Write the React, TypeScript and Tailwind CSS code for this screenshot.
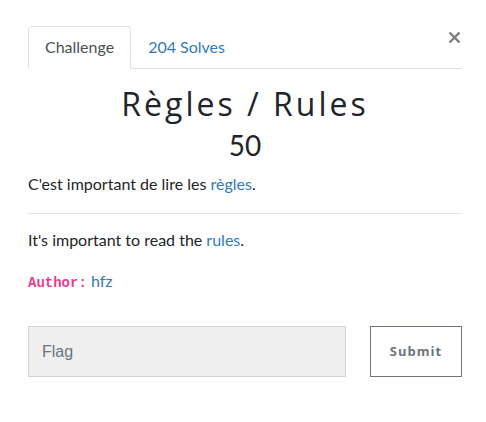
import React from "react";

export default function App() {
  return (
    <div className="relative w-[486px] h-[422px] bg-white text-[#212529]" style={{ fontFamily: "Lato, 'Noto Sans', sans-serif" }}>
      <button className="absolute left-[446px] top-[29px] w-[16px] h-[16px] flex items-center justify-center" aria-label="Close">
        <svg width="13" height="13" viewBox="0 0 13 13">
          <path d="M1.5 1.5 L11.5 11.5 M11.5 1.5 L1.5 11.5" stroke="#7d7d7d" strokeWidth="2.4" strokeLinecap="butt" />
        </svg>
      </button>
      <div className="pt-[26px] pl-[28px] w-[462px]">
        <nav className="flex border-b border-[#dee2e6] text-[16px] leading-[24px]">
          <div className="px-[16px] py-[8px] border border-[#dee2e6] border-b-white -mb-px rounded-t-[4px] bg-white text-[#495057]">Challenge</div>
          <div className="px-[16px] py-[8px] border border-transparent text-[#337ab7]">204 Solves</div>
        </nav>
        <div className="pt-[16px]">
          <h2 className="text-center text-[32px] leading-[38px] font-normal tracking-[3px] mb-[5px]" style={{ fontFamily: "'Open Sans', 'Noto Sans', sans-serif" }}>Règles / Rules</h2>
          <h3 className="text-center text-[28px] leading-[34px] font-normal mb-[10px]">50</h3>
          <p className="text-[16px] leading-[24px] mb-[17px]">C'est important de lire les <a className="text-[#337ab7]">règles</a>.</p>
          <hr className="border-t border-[#e5e5e5] mb-[14px]" />
          <p className="text-[16px] leading-[24px] mb-[17px]">It's important to read the <a className="text-[#337ab7]">rules</a>.</p>
          <p className="text-[16px] leading-[24px]">
            <code className="text-[#e83e8c] font-bold text-[14px]" style={{ fontFamily: "'Liberation Mono', monospace" }}>Author:</code>{" "}
            <a className="text-[#337ab7]">hfz</a>
          </p>
        </div>
        <div className="flex mt-[31px] gap-[24px] items-start">
          <input
            placeholder="Flag"
            className="w-[318px] h-[51px] bg-[#efefef] border border-[#ced4da] px-[13px] text-[16px] placeholder:text-[#6c757d] outline-none"
            style={{ fontFamily: "'Liberation Sans', Arial, sans-serif" }}
          />
          <button className="w-[92px] h-[51px] border border-[#6c757d] text-[#6c757d] font-bold text-[13px] tracking-[1px] bg-white" style={{ fontFamily: "'Open Sans', sans-serif" }}>Submit</button>
        </div>
      </div>
    </div>
  );
}
